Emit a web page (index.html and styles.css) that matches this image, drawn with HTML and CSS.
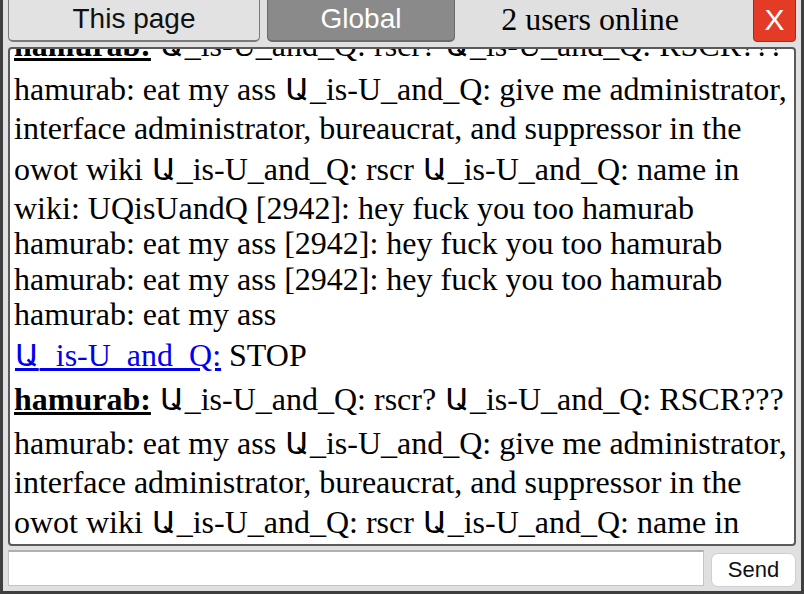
FILE: index.html
```html
<!DOCTYPE html>
<html>
<head>
<meta charset="utf-8">
<title>Chat</title>
<link rel="stylesheet" href="styles.css">
</head>
<body>
<div class="chat">
  <div class="tabs">
    <button class="tab">This page</button>
    <button class="tab tab-active">Global</button>
    <span class="online">2 users online</span>
    <button class="close">X</button>
  </div>
  <div class="log">
    <div class="log-inner">
      <div class="msg"><b class="nick">hamurab:</b> <span class="hy">Ա</span>_is-U_and_Q: rscr? <span class="hy">Ա</span>_is-U_and_Q: RSCR??? hamurab: eat my ass <span class="hy">Ա</span>_is-U_and_Q: give me administrator, interface administrator, bureaucrat, and suppressor in the owot wiki <span class="hy">Ա</span>_is-U_and_Q: rscr <span class="hy">Ա</span>_is-U_and_Q: name in wiki: UQisUandQ [2942]: hey fuck you too hamurab hamurab: eat my ass [2942]: hey fuck you too hamurab hamurab: eat my ass [2942]: hey fuck you too hamurab hamurab: eat my ass</div>
      <div class="msg"><a class="nick-link" href="#"><span class="hy">Ա</span>_is-U_and_Q:</a> STOP</div>
      <div class="msg"><b class="nick">hamurab:</b> <span class="hy">Ա</span>_is-U_and_Q: rscr? <span class="hy">Ա</span>_is-U_and_Q: RSCR??? hamurab: eat my ass <span class="hy">Ա</span>_is-U_and_Q: give me administrator, interface administrator, bureaucrat, and suppressor in the owot wiki <span class="hy">Ա</span>_is-U_and_Q: rscr <span class="hy">Ա</span>_is-U_and_Q: name in wiki: UQisUandQ [2942]: hey fuck you too hamurab hamurab: eat my ass [2942]: hey fuck you too hamurab hamurab: eat my ass [2942]: hey fuck you too hamurab hamurab: eat my ass</div>
    </div>
  </div>
  <div class="input-row">
    <input class="text-input" type="text">
    <button class="send">Send</button>
  </div>
</div>
</body>
</html>
```

FILE: styles.css
```css
html, body {
  margin: 0;
  padding: 0;
}

body {
  width: 804px;
  height: 594px;
  overflow: hidden;
  background: #e0e0e0;
}

.chat {
  box-sizing: border-box;
  width: 804px;
  height: 594px;
  display: flex;
  flex-direction: column;
  background: #e0e0e0;
  border-left: 3px solid #3f3f3f;
  border-right: 3px solid #3f3f3f;
  border-bottom: 3px solid #3f3f3f;
  padding: 0 5px 3px 5px;
  overflow: hidden;
}

.tabs {
  display: flex;
  align-items: stretch;
  height: 48px;
  margin-top: -6px;
  flex: none;
}

.tab {
  box-sizing: border-box;
  width: 252px;
  margin: 0;
  padding: 0;
  border: 1px solid #7a7a7a;
  border-bottom-width: 2px;
  border-radius: 5px;
  background: #e2e2e2;
  color: #111;
  font-family: "Liberation Sans", Helvetica, Arial, sans-serif;
  font-size: 28px;
  line-height: 48px;
}

.tab-active {
  width: 188px;
  margin-left: 7px;
  background: #8a8a8a;
  border-color: #6a6a6a;
  color: #ffffff;
}

.online {
  flex: 1;
  text-align: center;
  padding-right: 28px;
  font-family: "Liberation Serif", "Times New Roman", serif;
  font-size: 32px;
  line-height: 51px;
  color: #000;
}

.close {
  box-sizing: border-box;
  width: 43px;
  margin: 0;
  padding: 0;
  border: 1px solid #a8281a;
  border-radius: 4px;
  background: #e43b27;
  color: #fff;
  font-family: "Liberation Sans", Helvetica, Arial, sans-serif;
  font-size: 30px;
  line-height: 50px;
}

.log {
  flex: 1;
  margin-top: 5px;
  background: #fff;
  border: 2px solid #5a5a5a;
  border-radius: 4px;
  overflow: hidden;
  padding: 0 2px 0 4px;
}

.log-inner {
  margin-top: -26px;
}

.msg {
  font-family: "Liberation Serif", "Times New Roman", serif;
  font-size: 32px;
  line-height: 35.5px;
  color: #000;
}

.hy {
  font-family: "DejaVu Sans", sans-serif;
  font-size: 31px;
  line-height: 44px;
  margin: 0 1px;
}

.nick {
  font-weight: bold;
  text-decoration: underline;
}

.nick-link {
  color: #0000ee;
  text-decoration: underline;
}

.input-row {
  display: flex;
  align-items: flex-start;
  height: 38px;
  margin-top: 4px;
  flex: none;
}

.text-input {
  box-sizing: border-box;
  flex: 1;
  height: 36px;
  margin: 0 7px 0 0;
  padding: 0 4px;
  border: 1px solid #c4c4c4;
  border-top: 2px solid #b0b0b0;
  background: #fff;
  outline: none;
}

.send {
  box-sizing: border-box;
  width: 85px;
  height: 34px;
  margin-top: 3px;
  padding: 0;
  border: 1px solid #cfcfcf;
  border-radius: 7px;
  background: #fff;
  color: #111;
  font-family: "Liberation Sans", Helvetica, Arial, sans-serif;
  font-size: 22px;
  line-height: 32px;
}
```
